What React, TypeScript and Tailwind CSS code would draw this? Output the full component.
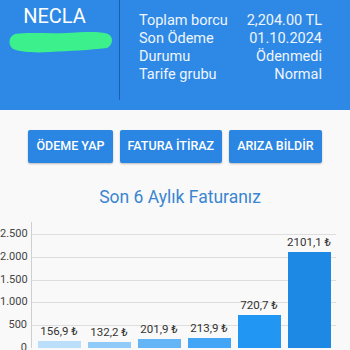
import React from 'react';

const info = [
  ['Toplam borcu', '2,204.00 TL'],
  ['Son Ödeme', '01.10.2024'],
  ['Durumu', 'Ödenmedi'],
  ['Tarife grubu', 'Normal'],
];

const bills = [
  { v: 156.9, c: 'bg-[#bbdefb]' },
  { v: 132.2, c: 'bg-[#90caf9]' },
  { v: 201.9, c: 'bg-[#64b5f6]' },
  { v: 213.9, c: 'bg-[#42a5f5]' },
  { v: 720.7, c: 'bg-[#2196f3]' },
  { v: 2101.1, c: 'bg-[#1e88e5]' },
];

const ticks = ['2.500', '2.000', '1.500', '1.000', '500'];
const PX_PER_UNIT = 114 / 2500;

export default function App() {
  return (
    <main className="min-h-[350px] bg-[#f9f9f9] font-['Roboto',sans-serif]">
      <header className="flex h-[110px] bg-[#2e89e6] text-white">
        <div className="w-[119px] flex flex-col items-center pt-[3px]">
          <span className="text-[20px] leading-[26px] pr-[10px]">NECLA</span>
          <svg width="106" height="22" viewBox="0 0 106 22" className="mt-[2px] ml-[2px]">
            <path d="M7 3 C22 1 40 3 58 2 C76 1 92 0 100 3 C106 6 105 14 99 17 C82 19 62 20 42 21 C26 22 12 21 5 18 C0 14 0 6 7 3 Z" fill="#3cf08c" />
          </svg>
        </div>
        <div className="w-px h-[100px] bg-[#1d5fab]" />
        <div className="flex-1 pl-[19px] pr-[28px] pt-[12px] flex flex-col text-[14.5px] leading-[18px] text-[#eef5fd]">
          {info.map(([k, v]) => (
            <div key={k} className="flex justify-between">
              <span>{k}</span>
              <span>{v}</span>
            </div>
          ))}
        </div>
      </header>

      <div className="flex justify-center gap-[7px] mt-[20px]">
        {['ÖDEME YAP', 'FATURA İTİRAZ', 'ARIZA BİLDİR'].map((t) => (
          <button
            key={t}
            className="h-[33px] px-[8px] rounded-[2px] bg-[#2a86e2] text-white text-[12.5px] font-medium shadow-[0_1px_2px_rgba(0,0,0,0.25)]"
          >
            {t}
          </button>
        ))}
      </div>

      <h2 className="mt-[22px] pl-[10px] text-center text-[17.5px] leading-[24px] text-[#3a86d0]">
        Son 6 Aylık Faturanız
      </h2>

      <section className="mt-[13px] flex">
        <div className="w-[31px] flex flex-col pt-[12px] text-[11px] text-[#444]">
          {ticks.map((t) => (
            <div key={t} className="h-[22.8px] -mt-[7px] mb-[7px] text-right pr-[4px] leading-[14px]">
              {t}
            </div>
          ))}
          <div className="text-right pr-[4px] leading-[14px] -mt-[7px]">0</div>
        </div>
        <div className="relative w-[305px] h-[126px] border-l border-[#cfcfcf]">
          <div className="flex flex-col pt-[12px]">
            {ticks.map((t) => (
              <div key={t} className="h-[22.8px] border-t border-[#dedede]" />
            ))}
          </div>
          <div className="absolute inset-x-0 bottom-0 flex items-end justify-around px-[2px]">
            {bills.map((b) => (
              <div key={b.v} className="flex flex-col items-center w-[43px]">
                <span className="text-[11.5px] leading-[14px] text-[#333] mb-[3px] whitespace-nowrap">
                  {b.v.toFixed(1).replace('.', ',')} ₺
                </span>
                <div className={`w-[43px] ${b.c}`} style={{ height: b.v * PX_PER_UNIT }} />
              </div>
            ))}
          </div>
        </div>
      </section>
    </main>
  );
}
